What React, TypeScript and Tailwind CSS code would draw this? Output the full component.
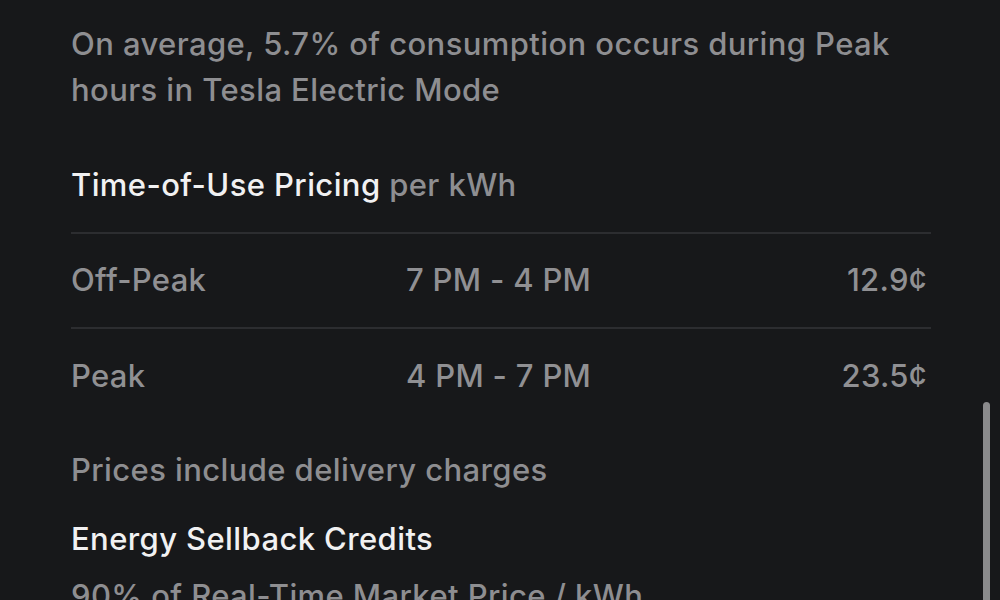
const rows = [
  { label: 'Off-Peak', time: '7 PM - 4 PM', price: '12.9¢' },
  { label: 'Peak', time: '4 PM - 7 PM', price: '23.5¢' },
];

export default function App() {
  return (
    <div
      className="relative h-[600px] w-[1000px] overflow-hidden bg-[#17181a] font-medium tracking-[0.025em]"
      style={{ fontFamily: 'Inter, "Liberation Sans", sans-serif' }}
    >
      <div className="w-[931px] pl-[71px] pt-[21px]">
        <p className="text-[31px] leading-[46px] text-[#8e8e91]">
          On average, 5.7% of consumption occurs during Peak hours in Tesla Electric Mode
        </p>

        <h2 className="mt-[49px] text-[31px] leading-[46px] text-[#f1f1f2]">
          Time-of-Use Pricing <span className="text-[#8e8e91]">per kWh</span>
        </h2>

        <div className="mt-[24px] border-t-2 border-[#2c2d30]">
          {rows.map((r, i) => (
            <div
              key={r.label}
              className={`flex h-[95px] items-center text-[31px] tracking-[0.01em] text-[#909093] ${
                i === 0 ? 'border-b-2 border-[#2c2d30]' : ''
              }`}
            >
              <span className="w-[335px]">{r.label}</span>
              <span className="flex-1">{r.time}</span>
              <span className="pr-[4px]">{r.price}</span>
            </div>
          ))}
        </div>

        <p className="mt-[23px] text-[31px] leading-[46px] text-[#8e8e91]">
          Prices include delivery charges
        </p>

        <h2 className="mt-[23px] text-[31px] leading-[46px] text-[#f1f1f2]">
          Energy Sellback Credits
        </h2>
        <p className="mt-[11px] text-[31px] leading-[46px] text-[#8e8e91]">
          90% of Real-Time Market Price / kWh
        </p>
      </div>

      {/* scroll thumb */}
      <div className="absolute right-[10px] top-[402px] h-[220px] w-[7px] rounded-full bg-[#8a8a8c]" />
    </div>
  );
}
